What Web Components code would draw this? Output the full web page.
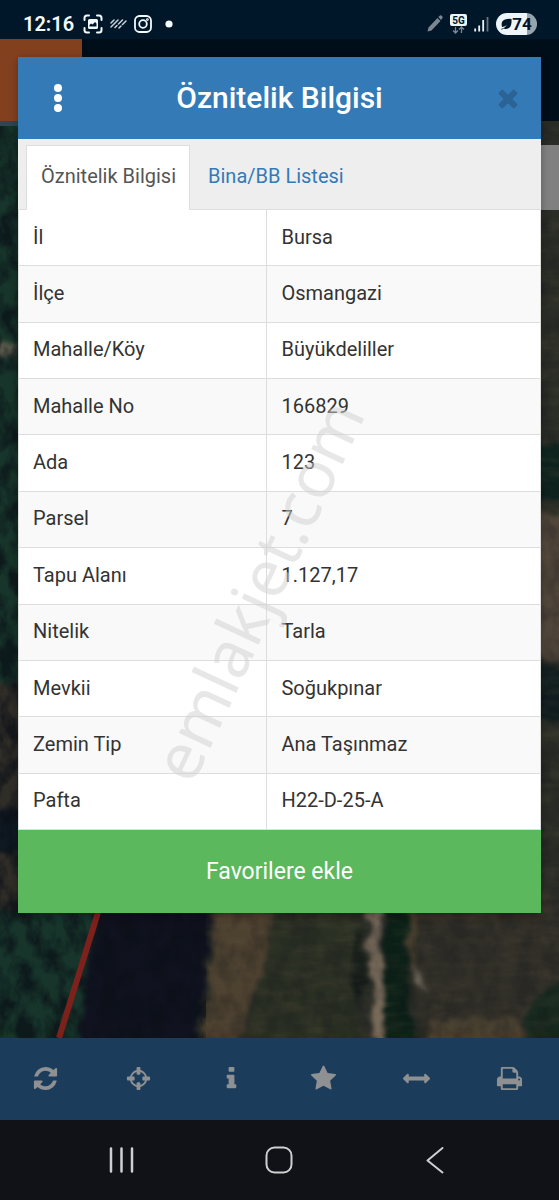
<!DOCTYPE html>
<html lang="tr">
<head>
    <meta charset="utf-8">
    <meta name="viewport" content="width=device-width, initial-scale=1">
    <title>Öznitelik Bilgisi</title>
    <style>
        body {
            margin: 0;
            background: #111217;
            font-family: Roboto, sans-serif;
        }
    </style>
</head>
<body>
    <app-screen>
        <status-bar slot="status"></status-bar>
        <app-header slot="header"></app-header>
        <map-view slot="map"></map-view>
        <map-toolbar slot="toolbar"></map-toolbar>
        <system-nav slot="nav"></system-nav>
        <info-dialog slot="dialog">
            <span slot="title">Öznitelik Bilgisi</span>
            <tab-list></tab-list>
            <attribute-table></attribute-table>
            <span slot="action">Favorilere ekle</span>
        </info-dialog>
        <water-mark slot="dialog">emlakjet.com</water-mark>
    </app-screen>

    <template id="app-screen">
        <style>
            :host {
                position: relative;
                display: grid;
                grid-template-rows: auto auto 1fr auto auto;
                min-height: 100vh;
            }
        </style>
        <slot name="status"></slot>
        <slot name="header"></slot>
        <slot name="map"></slot>
        <slot name="toolbar"></slot>
        <slot name="nav"></slot>
        <slot name="dialog"></slot>
    </template>

    <template id="status-bar">
        <style>
            :host {
                display: flex;
                justify-content: space-between;
                align-items: center;
                height: 39px;
                padding: 8px 22px 0 23px;
                box-sizing: border-box;
                background: #001629;
                color: #f4fbff;
            }
            div {
                display: flex;
                align-items: center;
                gap: 7px;
            }
            time {
                margin-right: 2px;
                font-size: 20px;
                font-weight: 600;
                line-height: 24px;
            }
            svg {
                display: block;
            }
            .battery {
                display: flex;
                align-items: center;
                justify-content: center;
                width: 41px;
                height: 22px;
                border-radius: 11px;
                background: linear-gradient(90deg, #eef5fa 75%, #97a3ad 75%);
                color: #001629;
                font-size: 17px;
                font-weight: 700;
                line-height: 22px;
            }
        </style>
        <div>
            <time>12:16</time>
            <svg width="20" height="20" viewBox="0 0 20 20" fill="none" stroke="#f4fbff" stroke-width="2" stroke-linecap="round">
                <path d="M1.500 6V4Q1.500 1.500 4 1.500H6M14 1.500h2q2.500 0 2.500 2.500v2M18.500 14v2q0 2.500-2.500 2.500h-2M6 18.500H4Q1.500 18.500 1.500 16v-2"/>
                <path fill="#f4fbff" stroke="none" fill-rule="evenodd" d="M6.500 5h7Q15 5 15 6.500v7q0 1.500-1.500 1.500h-7Q5 15 5 13.500v-7Q5 5 6.500 5zM6.500 12.500h7v-3l-1.500-1.500-2.500 2.500-1.500-1-1.500 1.500z"/>
            </svg>
            <svg width="17" height="12" viewBox="0 0 17 12" stroke="#c8d4dd" stroke-width="1.500" stroke-linecap="round">
                <path d="M1 5l3-3M1 9l7-7M5 9.500l2-2M8.500 6l4-4M9 10l2-2M12.500 6.500l3.500-3.500"/>
            </svg>
            <svg width="18" height="18" viewBox="0 0 18 18" fill="none" stroke="#f4fbff" stroke-width="1.800">
                <rect x="1" y="1" width="16" height="16" rx="4.500"/>
                <circle cx="9" cy="9" r="3.800"/>
                <circle cx="13.400" cy="4.600" r="0.500"/>
            </svg>
            <svg width="20" height="8" viewBox="0 0 20 8" fill="#f4fbff"><circle cx="10" cy="4" r="3.600"/></svg>
        </div>
        <div>
            <svg width="16" height="17" viewBox="0 0 16 17" fill="#7d8791">
                <path d="M0.500 16.500l1-4L10.500 3l3 3L4.500 15.500zM11.300 2l1.700-1.500q1-.5 2 .5t.500 2L14 5z"/>
            </svg>
            <svg width="17" height="20" viewBox="0 0 17 20">
                <rect width="17" height="12" rx="2" fill="#eef5fa"/>
                <text x="8.500" y="10" text-anchor="middle" font-size="10" font-weight="700" fill="#001629">5G</text>
                <path d="M5.500 13v6M3 16.500L5.500 19 8 16.500M11.500 19v-6M9 15.500l2.500-2.500 2.500 2.500" fill="none" stroke="#7d8791" stroke-width="1.300"/>
            </svg>
            <svg width="15" height="16" viewBox="0 0 15 16" stroke="#eef5fa" stroke-width="1.800">
                <path d="M1.200 15.500v-3M5.200 15.500V9.500M9.200 15.500V4"/>
                <path d="M13.500 15.500V1" stroke="#6b7680"/>
            </svg>
            <span class="battery">
                <svg width="11" height="12" viewBox="0 0 11 12" fill="#001629">
                    <path d="M0 11q4-1 6-4-3 2-5 2Q-.5 3 4 1.500 7 .5 10.500 1q.5 7-2.500 9-3 1.800-5 .5-1.500 1-3 1z"/>
                </svg>
                <span>74</span>
            </span>
        </div>
    </template>

    <template id="app-header">
        <style>
            :host {
                display: flex;
                height: 82px;
                background: #000e19;
            }
            .logo {
                width: 82px;
                background: #83401f;
            }
        </style>
        <div class="logo"></div>
    </template>

    <template id="map-view">
        <style>
            :host {
                position: relative;
                display: grid;
                min-height: 0;
                overflow: hidden;
                background: #1c241f;
            }
            svg {
                display: block;
                width: 100%;
                height: 100%;
            }
            button {
                position: absolute;
                top: 24px;
                right: 0;
                width: 66px;
                height: 65px;
                padding: 0;
                border: 0;
                background: #808080;
            }
        </style>
        <svg viewBox="0 0 559 917" preserveAspectRatio="none" aria-hidden="true" color-interpolation-filters="sRGB">
            <defs>
                <filter id="rough" x="-5%" y="-5%" width="110%" height="110%">
                    <feTurbulence type="fractalNoise" baseFrequency="0.060" numOctaves="4" seed="8"/>
                    <feDisplacementMap in="SourceGraphic" scale="20" xChannelSelector="R" yChannelSelector="G"/>
                    <feGaussianBlur stdDeviation="2"/>
                </filter>
                <filter id="trees" x="0" y="0" width="100%" height="100%">
                    <feTurbulence type="fractalNoise" baseFrequency="0.060 0.040" numOctaves="4" seed="21"/>
                    <feColorMatrix values="0 0 0 0 0.040  0 0 0 0 0.060  0 0 0 0 0.090  3 0 0 0 -1.100"/>
                </filter>
                <filter id="grain" x="0" y="0" width="100%" height="100%">
                    <feTurbulence type="fractalNoise" baseFrequency="0.030 0.120" numOctaves="4" seed="3"/>
                    <feColorMatrix values="0 0 0 0 0.400  0 0 0 0 0.350  0 0 0 0 0.260  2 0 0 0 -0.800"/>
                </filter>
            </defs>
            <rect width="559" height="917" fill="#2b2e27"/>
            <g filter="url(#rough)">
                <path d="M-20-20H110V940H-20z" fill="#17352a"/>
                <path d="M-20 560H40V790H-20z" fill="#302d28"/>
                <path d="M-20 690H34V730H-20z" fill="#101b23"/>
                <path d="M98 770H210L206 850 190 940H76z" fill="#10131f"/>
                <path d="M214 780H278L262 850 230 940H200L210 850z" fill="#4d4130"/>
                <path d="M280 770H362L356 940H240L264 850z" fill="#2b3024"/>
                <path d="M358 800L368 850 360 885 352 860z" fill="#141c19"/>
                <path d="M366 770H384L380 830 386 880 382 940H374L370 850z" fill="#7a6c5c"/>
                <path d="M386 770H410L404 850 420 940H388L384 850z" fill="#0c2118"/>
                <path d="M408 770H420L414 850H406z" fill="#453c2c"/>
                <path d="M420 770H580V940H430L414 880z" fill="#312f28"/>
                <path d="M410 840L420 850 426 868 416 862z" fill="#6c655d"/>
                <path d="M544 868L590 850V940H520L529 885z" fill="#17291f"/>
                <path d="M430 898H520V940H430z" fill="#4a4130"/>
                <path d="M530 320H590V380H530z" fill="#0f251f"/>
                <path d="M530 390H590V540H530z" fill="#51463a"/>
                <path d="M530 545H590V600H530z" fill="#121f20"/>
                <path d="M-10 226L18 222V234L-10 238z" fill="#56564a"/>
            </g>
            <rect width="206" height="917" filter="url(#trees)" opacity="0.700"/>
            <rect x="206" width="353" height="917" filter="url(#grain)" opacity="0.200"/>
            <rect x="206" width="353" height="917" filter="url(#trees)" opacity="0.200"/>
            <path d="M145 640L59 917" stroke="#7c211c" stroke-width="6"/>
            <rect width="82" height="5" fill="#29484f"/>
        </svg>
        <button type="button" aria-label="Katmanlar"></button>
    </template>

    <template id="map-toolbar">
        <style>
            :host {
                display: grid;
                grid-template-columns: repeat(6, 1fr);
                height: 82px;
                padding-right: 2px;
                background: #1b3d5b;
            }
            button {
                display: grid;
                place-items: center;
                padding: 0 2px 2px 0;
                border: 0;
                background: none;
            }
            svg {
                width: 27px;
                height: 27px;
                fill: #8f9092;
            }
        </style>
    </template>

    <template id="system-nav">
        <style>
            :host {
                display: grid;
                grid-template-columns: repeat(3, 1fr);
                height: 80px;
                padding: 0 45px 0 43px;
                background: #111217;
            }
            button {
                display: grid;
                place-items: center;
                padding: 0;
                border: 0;
                background: none;
            }
            svg {
                width: 28px;
                height: 28px;
                fill: none;
                stroke: #cfcfd1;
                stroke-width: 2;
                stroke-linecap: round;
                stroke-linejoin: round;
            }
        </style>
        <button type="button" aria-label="Son uygulamalar">
            <svg viewBox="0 0 28 28"><path d="M3 2.500v23M13.500 2.500v23M24 2.500v23" stroke-width="2.500"/></svg>
        </button>
        <button type="button" aria-label="Ana ekran">
            <svg viewBox="0 0 28 28"><rect x="1.500" y="1.500" width="25" height="25" rx="8"/></svg>
        </button>
        <button type="button" aria-label="Geri">
            <svg viewBox="0 0 28 28"><path d="M20.500 2L5.500 14.500 20.500 26.500"/></svg>
        </button>
    </template>

    <template id="info-dialog">
        <style>
            :host {
                position: absolute;
                top: 57px;
                left: 18px;
                right: 18px;
                background: #ffffff;
                box-shadow: 0 2px 8px rgba(0, 0, 0, 0.3);
            }
            header {
                display: grid;
                grid-template-columns: 80px 1fr 80px;
                height: 82px;
                background: #337ab7;
            }
            h1 {
                align-self: center;
                margin: 0;
                color: #ffffff;
                font-size: 30px;
                font-weight: 500;
                line-height: 36px;
                text-align: center;
            }
            button {
                border: 0;
                font-family: inherit;
            }
            header button {
                display: grid;
                place-items: center;
                padding: 0;
                background: none;
            }
            header button:last-child {
                justify-items: end;
                padding-right: 19px;
            }
            svg {
                display: block;
            }
            .action {
                display: block;
                width: 100%;
                padding: 27px 0;
                background: #5cb85c;
                color: #ffffff;
                font-size: 23px;
                line-height: 29px;
            }
        </style>
        <header>
            <button type="button" aria-label="Menü">
                <svg width="8" height="28" viewBox="0 0 8 28" fill="#ffffff">
                    <circle cx="4" cy="4" r="4"/><circle cx="4" cy="14" r="4"/><circle cx="4" cy="24" r="4"/>
                </svg>
            </button>
            <h1><slot name="title"></slot></h1>
            <button type="button" aria-label="Kapat">
                <svg width="28" height="28" viewBox="0 0 1792 1792" fill="#2a6394">
                    <path d="M1490 1322q0 40-28 68l-136 136q-28 28-68 28t-68-28l-294-294-294 294q-28 28-68 28t-68-28l-136-136q-28-28-28-68t28-68l294-294-294-294q-28-28-28-68t28-68l136-136q28-28 68-28t68 28l294 294 294-294q28-28 68-28t68 28l136 136q28 28 28 68t-28 68l-294 294 294 294q28 28 28 68z"/>
                </svg>
            </button>
        </header>
        <slot></slot>
        <button class="action" type="button"><slot name="action"></slot></button>
    </template>

    <template id="tab-list">
        <style>
            :host {
                display: block;
                background: #eeeeee;
            }
            nav {
                display: flex;
                gap: 3px;
                padding: 6px 8px 0;
                border-bottom: 1px solid #dddddd;
            }
            a {
                margin-bottom: -1px;
                padding: 16px 13px 19px 14px;
                border: 1px solid transparent;
                color: #337ab7;
                font-size: 20px;
                line-height: 28px;
                text-decoration: none;
            }
            a[aria-current] {
                border-color: #dddddd;
                border-bottom-color: #ffffff;
                background: #ffffff;
                color: #555555;
            }
        </style>
        <nav>
            <a href="#oznitelik" aria-current="true">Öznitelik Bilgisi</a>
            <a href="#bina">Bina/BB Listesi</a>
        </nav>
    </template>

    <template id="attribute-table">
        <style>
            :host {
                display: block;
            }
            table {
                width: 100%;
                height: 620px;
                border-collapse: collapse;
                color: #333333;
                font-size: 20px;
                line-height: 28px;
            }
            tr:nth-child(even) {
                background: #f9f9f9;
            }
            th,
            td {
                padding: 12px 14px 14px;
                border: 1px solid #dddddd;
                font-weight: 400;
                text-align: left;
            }
            tr:first-child > * {
                border-top: 0;
            }
            th {
                width: 47.6%;
                box-sizing: border-box;
            }
        </style>
        <table>
            <tbody></tbody>
        </table>
    </template>

    <template id="water-mark">
        <style>
            :host {
                position: absolute;
                inset: 0;
                pointer-events: none;
            }
            svg {
                display: block;
                width: 100%;
                height: 100%;
            }
            text {
                font-family: "Noto Sans", sans-serif;
                font-size: 65px;
                fill: rgba(208, 208, 208, 0.5);
            }
        </style>
        <svg viewBox="-280 -600 560 1200">
            <text text-anchor="middle" transform="rotate(-65)"></text>
        </svg>
        <slot hidden></slot>
    </template>

    <script>
        class TemplateElement extends HTMLElement {
            constructor() {
                super();
                const template = document.getElementById(this.localName);
                this.attachShadow({ mode: 'open' }).appendChild(template.content.cloneNode(true));
            }
        }

        class MapToolbar extends TemplateElement {
            connectedCallback() {
                const tools = [
                    ['Yenile', 'M1639 1056q0 5-1 7-64 268-268 434.500t-478 166.500q-146 0-282.500-55t-243.500-157l-129 129q-19 19-45 19t-45-19-19-45v-448q0-26 19-45t45-19h448q26 0 45 19t19 45-19 45l-137 137q71 66 161 102t187 36q134 0 250-65t186-179q11-17 53-117 8-23 30-23h192q13 0 22.500 9.500t9.500 22.500zm25-800v448q0 26-19 45t-45 19h-448q-26 0-45-19t-19-45 19-45l138-138q-148-137-349-137-134 0-250 65t-186 179q-11 17-53 117-8 23-30 23h-199q-13 0-22.500-9.500t-9.500-22.500v-7q65-268 270-434.500t480-166.500q146 0 284 55.500t245 156.500l130-129q19-19 45-19t45 19 19 45z'],
                    ['Konum', 'M1325 1024h-109q-26 0-45-19t-19-45v-128q0-26 19-45t45-19h109q-32-108-112.500-188.500t-188.500-112.500v109q0 26-19 45t-45 19h-128q-26 0-45-19t-19-45v-109q-108 32-188.500 112.500t-112.500 188.500h109q26 0 45 19t19 45v128q0 26-19 45t-45 19h-109q32 108 112.500 188.500t188.500 112.500v-109q0-26 19-45t45-19h128q26 0 45 19t19 45v109q108-32 188.500-112.500t112.500-188.500zm339-192v128q0 26-19 45t-45 19h-143q-37 161-154.500 278.500t-278.500 154.500v143q0 26-19 45t-45 19h-128q-26 0-45-19t-19-45v-143q-161-37-278.500-154.500t-154.500-278.500h-143q-26 0-45-19t-19-45v-128q0-26 19-45t45-19h143q37-161 154.500-278.500t278.500-154.500v-143q0-26 19-45t45-19h128q26 0 45 19t19 45v143q161 37 278.500 154.500t154.500 278.500h143q26 0 45 19t19 45z'],
                    ['Bilgi', 'M1216 1344v128q0 26-19 45t-45 19h-512q-26 0-45-19t-19-45v-128q0-26 19-45t45-19h64v-384h-64q-26 0-45-19t-19-45v-128q0-26 19-45t45-19h384q26 0 45 19t19 45v576h64q26 0 45 19t19 45zm-128-1152v192q0 26-19 45t-45 19h-256q-26 0-45-19t-19-45v-192q0-26 19-45t45-19h256q26 0 45 19t19 45z'],
                    ['Favoriler', 'M1728 647q0 22-26 48l-363 354 86 500q1 7 1 20 0 21-10.500 35.500t-30.500 14.500q-19 0-40-12l-449-236-449 236q-22 12-40 12-21 0-31.500-14.500t-10.500-35.500q0-6 2-20l86-500-364-354q-25-27-25-48 0-37 56-46l502-73 225-455q19-41 49-41t49 41l225 455 502 73q56 9 56 46z'],
                    ['Ölçüm', 'M1792 896q0 26-19 45l-256 256q-19 19-45 19t-45-19-19-45v-128h-1024v128q0 26-19 45t-45 19-45-19l-256-256q-19-19-19-45t19-45l256-256q19-19 45-19t45 19 19 45v128h1024v-128q0-26 19-45t45-19 45 19l256 256q19 19 19 45z'],
                    ['Yazdır', 'M448 1536h896v-256h-896v256zm0-640h896v-384h-160q-40 0-68-28t-28-68v-160h-640v640zm1152 64q0-26-19-45t-45-19-45 19-19 45 19 45 45 19 45-19 19-45zm128 0v416q0 13-9.500 22.500t-22.500 9.500h-224v160q0 40-28 68t-68 28h-960q-40 0-68-28t-28-68v-160h-224q-13 0-22.500-9.500t-9.500-22.500v-416q0-79 56.500-135.500t135.500-56.500h64v-544q0-40 28-68t68-28h672q40 0 88 20t76 48l152 152q28 28 48 76t20 88v256h64q79 0 135.500 56.500t56.500 135.500z']
                ];

                for (const [label, path] of tools) {
                    const button = document.createElement('button');
                    button.type = 'button';
                    button.setAttribute('aria-label', label);
                    button.innerHTML = `<svg viewBox="0 0 1792 1792"><path d="${path}"/></svg>`;
                    this.shadowRoot.appendChild(button);
                }
            }
        }

        class AttributeTable extends TemplateElement {
            connectedCallback() {
                this.render([
                    ['İl', 'Bursa'],
                    ['İlçe', 'Osmangazi'],
                    ['Mahalle/Köy', 'Büyükdeliller'],
                    ['Mahalle No', '166829'],
                    ['Ada', '123'],
                    ['Parsel', '7'],
                    ['Tapu Alanı', '1.127,17'],
                    ['Nitelik', 'Tarla'],
                    ['Mevkii', 'Soğukpınar'],
                    ['Zemin Tip', 'Ana Taşınmaz'],
                    ['Pafta', 'H22-D-25-A']
                ]);
            }

            render(rows) {
                const body = this.shadowRoot.querySelector('tbody');

                for (const [name, value] of rows) {
                    const row = body.insertRow();
                    const head = document.createElement('th');
                    head.scope = 'row';
                    head.textContent = name;
                    row.appendChild(head);
                    row.insertCell().textContent = value;
                }
            }
        }

        class WaterMark extends TemplateElement {
            connectedCallback() {
                this.shadowRoot.querySelector('text').textContent = this.textContent;
            }
        }

        customElements.define('app-screen', class extends TemplateElement {});
        customElements.define('status-bar', class extends TemplateElement {});
        customElements.define('app-header', class extends TemplateElement {});
        customElements.define('map-view', class extends TemplateElement {});
        customElements.define('map-toolbar', MapToolbar);
        customElements.define('system-nav', class extends TemplateElement {});
        customElements.define('info-dialog', class extends TemplateElement {});
        customElements.define('tab-list', class extends TemplateElement {});
        customElements.define('attribute-table', AttributeTable);
        customElements.define('water-mark', WaterMark);
    </script>
</body>
</html>
